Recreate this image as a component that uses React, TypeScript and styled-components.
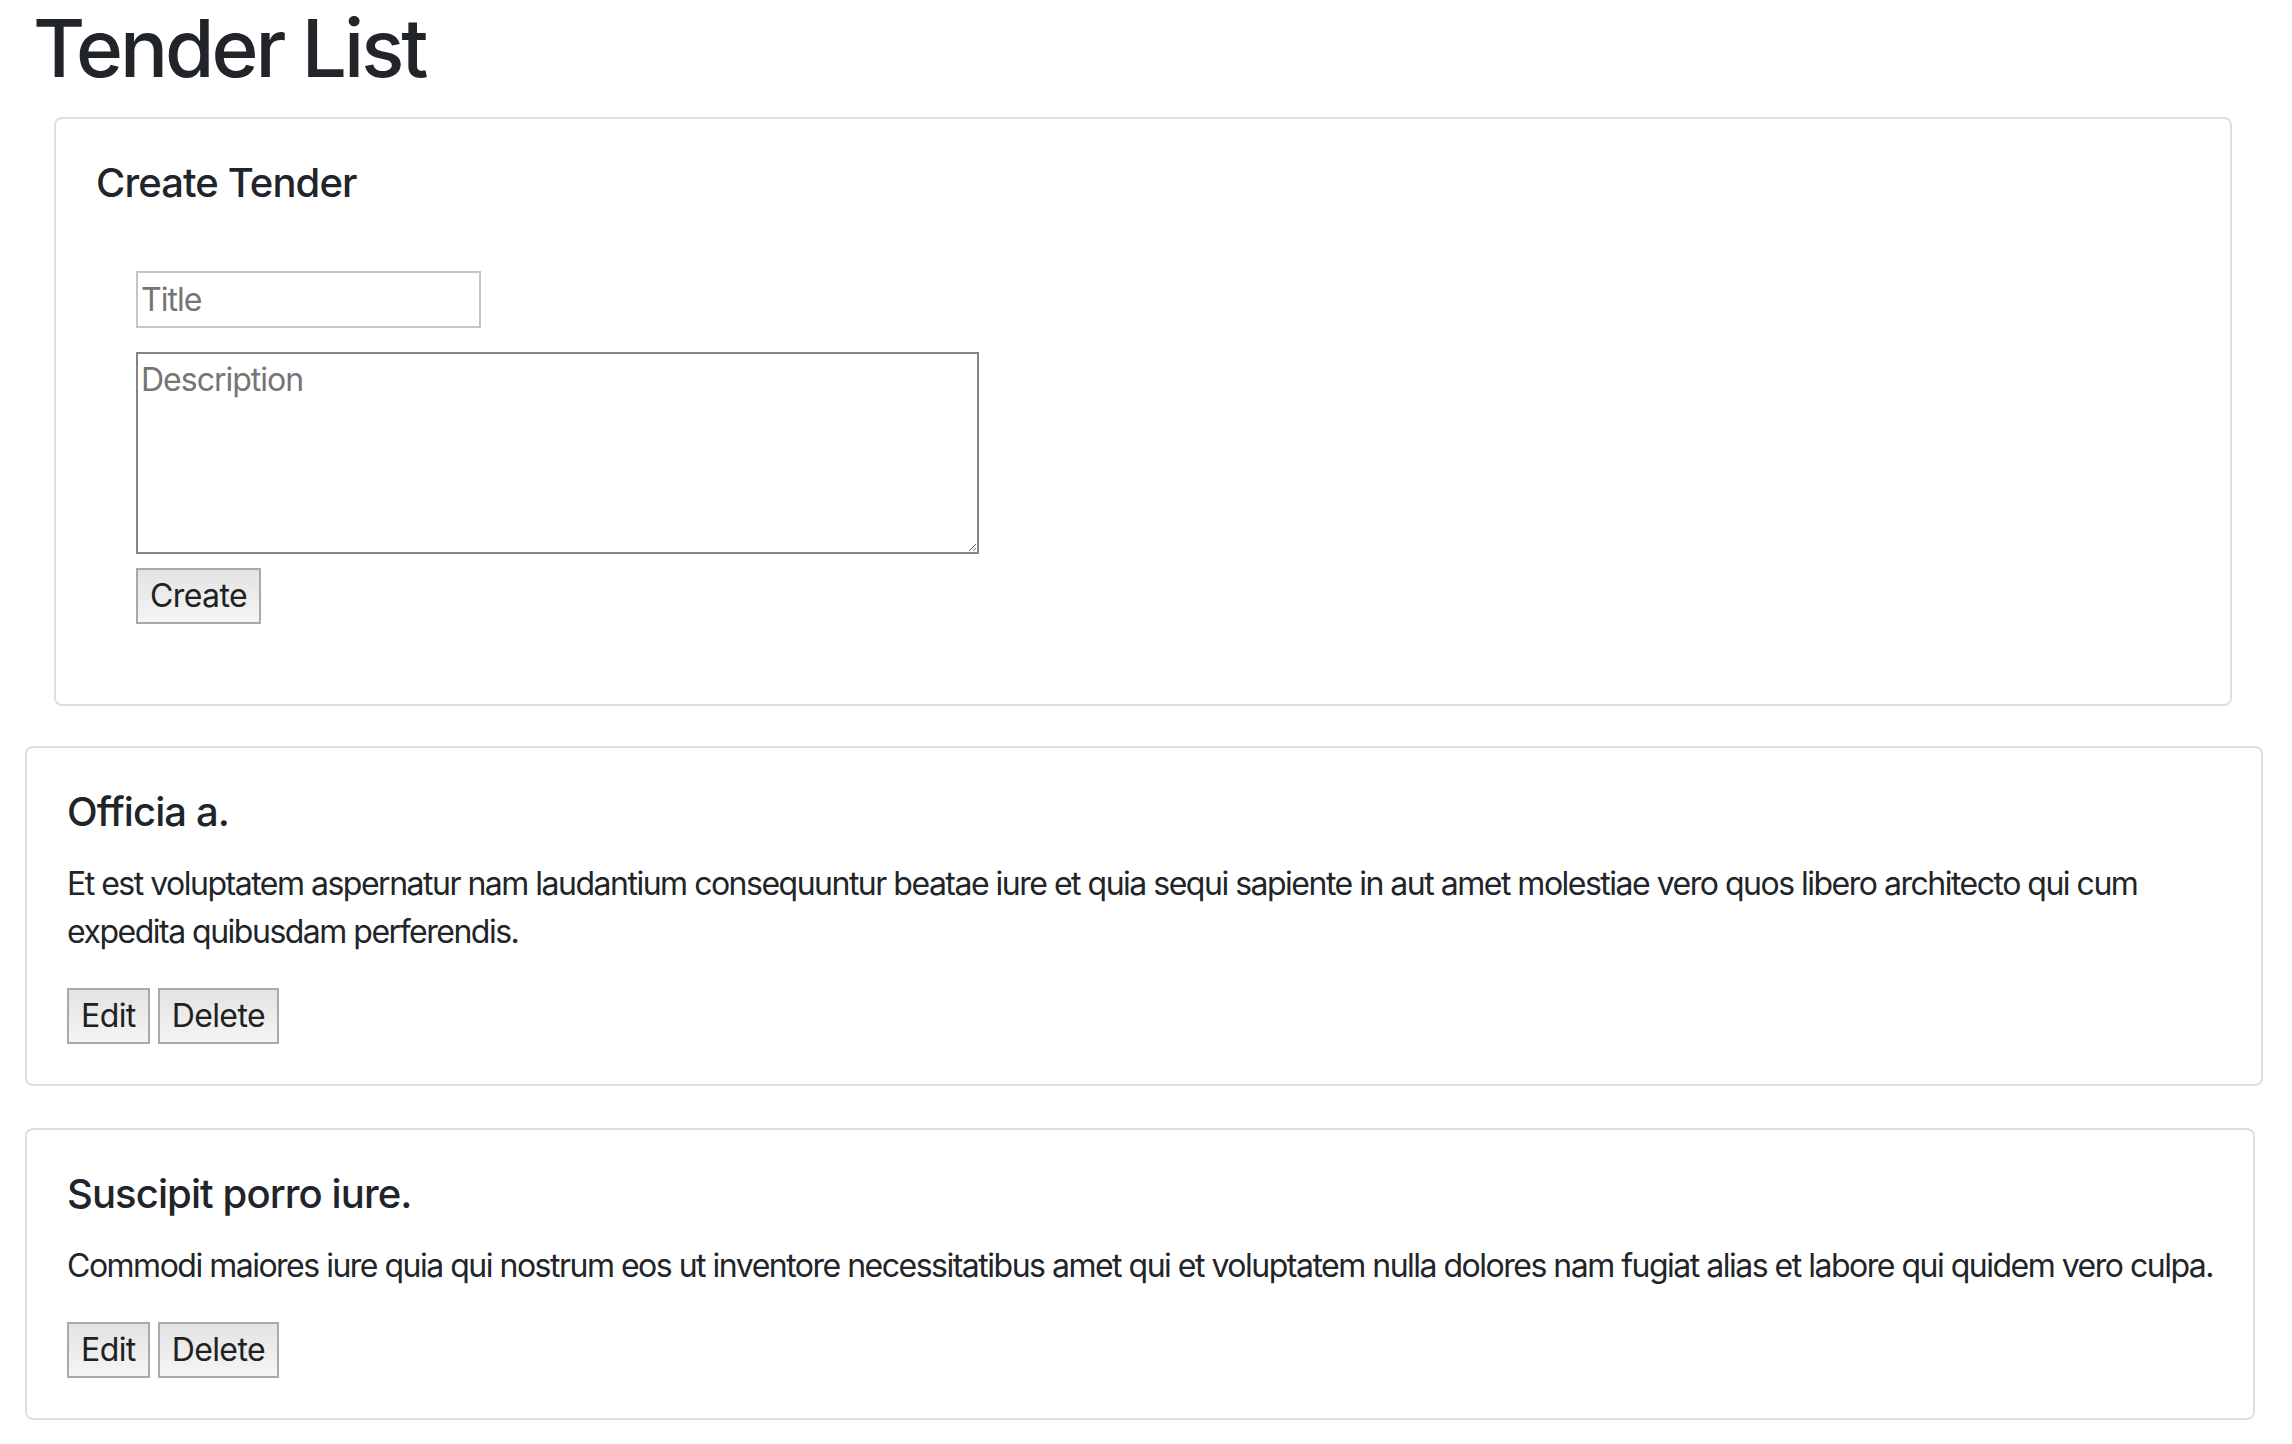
import React from "react";
import styled, { createGlobalStyle } from "styled-components";

const GlobalStyle = createGlobalStyle`
  html, body {
    margin: 0;
    padding: 0;
    background: #ffffff;
  }
  body {
    font-family: "Inter", "Liberation Sans", Arial, sans-serif;
    font-size: 32px;
    line-height: 48px;
    color: #212529;
    letter-spacing: -1.5px;
  }
  *, *::before, *::after { box-sizing: border-box; }
`;

const Page = styled.div`
  padding: 0 29px 24px 25px;
  display: flex;
  flex-direction: column;
  align-items: flex-start;
`;

const PageTitle = styled.h1`
  margin: 0 0 21px 8px;
  font-size: 80px;
  line-height: 96px;
  font-weight: 500;
  letter-spacing: -3px;
`;

const Card = styled.div<{ $inset?: boolean }>`
  border: 2px solid #dfdfdf;
  border-radius: 8px;
  background: #fff;
  padding: 40px;
  max-width: 100%;
  align-self: ${(p) => (p.$inset ? "stretch" : "flex-start")};
  margin: ${(p) => (p.$inset ? "0 31px 40px 29px" : "0 0 42px 0")};
`;

const CardTitle = styled.h5`
  margin: 0 0 24px;
  font-size: 40px;
  line-height: 48px;
  font-weight: 500;
  letter-spacing: -0.9px;
`;

const CardText = styled.p`
  margin: 0 0 32px;
`;

const Form = styled.form`
  padding: 40px;
  display: flex;
  flex-direction: column;
  align-items: flex-start;
`;

const TextInput = styled.input`
  width: 345px;
  height: 57px;
  margin: 0 0 24px;
  padding: 2px 3px;
  font: inherit;
  letter-spacing: -1px;
  color: #212529;
  border: 2px solid #c6c6c6;
  border-radius: 0;
  outline: none;
  &::placeholder { color: #757575; }
`;

const TextArea = styled.textarea`
  width: 843px;
  height: 202px;
  margin: 0 0 14px;
  padding: 2px 3px;
  font: inherit;
  letter-spacing: -1px;
  color: #212529;
  border: 2px solid #858585;
  border-radius: 0;
  outline: none;
  resize: both;
  &::placeholder { color: #757575; }
`;

const Actions = styled.div`
  display: flex;
  gap: 8px;
`;

const Button = styled.button`
  height: 56px;
  margin: 0;
  padding: 2px 12px;
  font: inherit;
  letter-spacing: -0.6px;
  color: #212121;
  background: linear-gradient(#e3e3e3, #f5f5f5);
  border: 2px solid #a9a9a9;
  border-radius: 0;
  cursor: pointer;
`;

type Tender = { id: number; title: string; description: string };

const tenders: Tender[] = [
  {
    id: 1,
    title: "Officia a.",
    description:
      "Et est voluptatem aspernatur nam laudantium consequuntur beatae iure et quia sequi sapiente in aut amet molestiae vero quos libero architecto qui cum expedita quibusdam perferendis.",
  },
  {
    id: 2,
    title: "Suscipit porro iure.",
    description:
      "Commodi maiores iure quia qui nostrum eos ut inventore necessitatibus amet qui et voluptatem nulla dolores nam fugiat alias et labore qui quidem vero culpa.",
  },
];

export default function App() {
  return (
    <>
      <GlobalStyle />
      <Page>
        <PageTitle>Tender List</PageTitle>
        <Card $inset>
          <CardTitle>Create Tender</CardTitle>
          <Form onSubmit={(e) => e.preventDefault()}>
            <TextInput type="text" placeholder="Title" />
            <TextArea placeholder="Description" rows={4} />
            <Button type="submit">Create</Button>
          </Form>
        </Card>
        {tenders.map((t) => (
          <Card key={t.id}>
            <CardTitle>{t.title}</CardTitle>
            <CardText>{t.description}</CardText>
            <Actions>
              <Button type="button">Edit</Button>
              <Button type="button">Delete</Button>
            </Actions>
          </Card>
        ))}
      </Page>
    </>
  );
}
